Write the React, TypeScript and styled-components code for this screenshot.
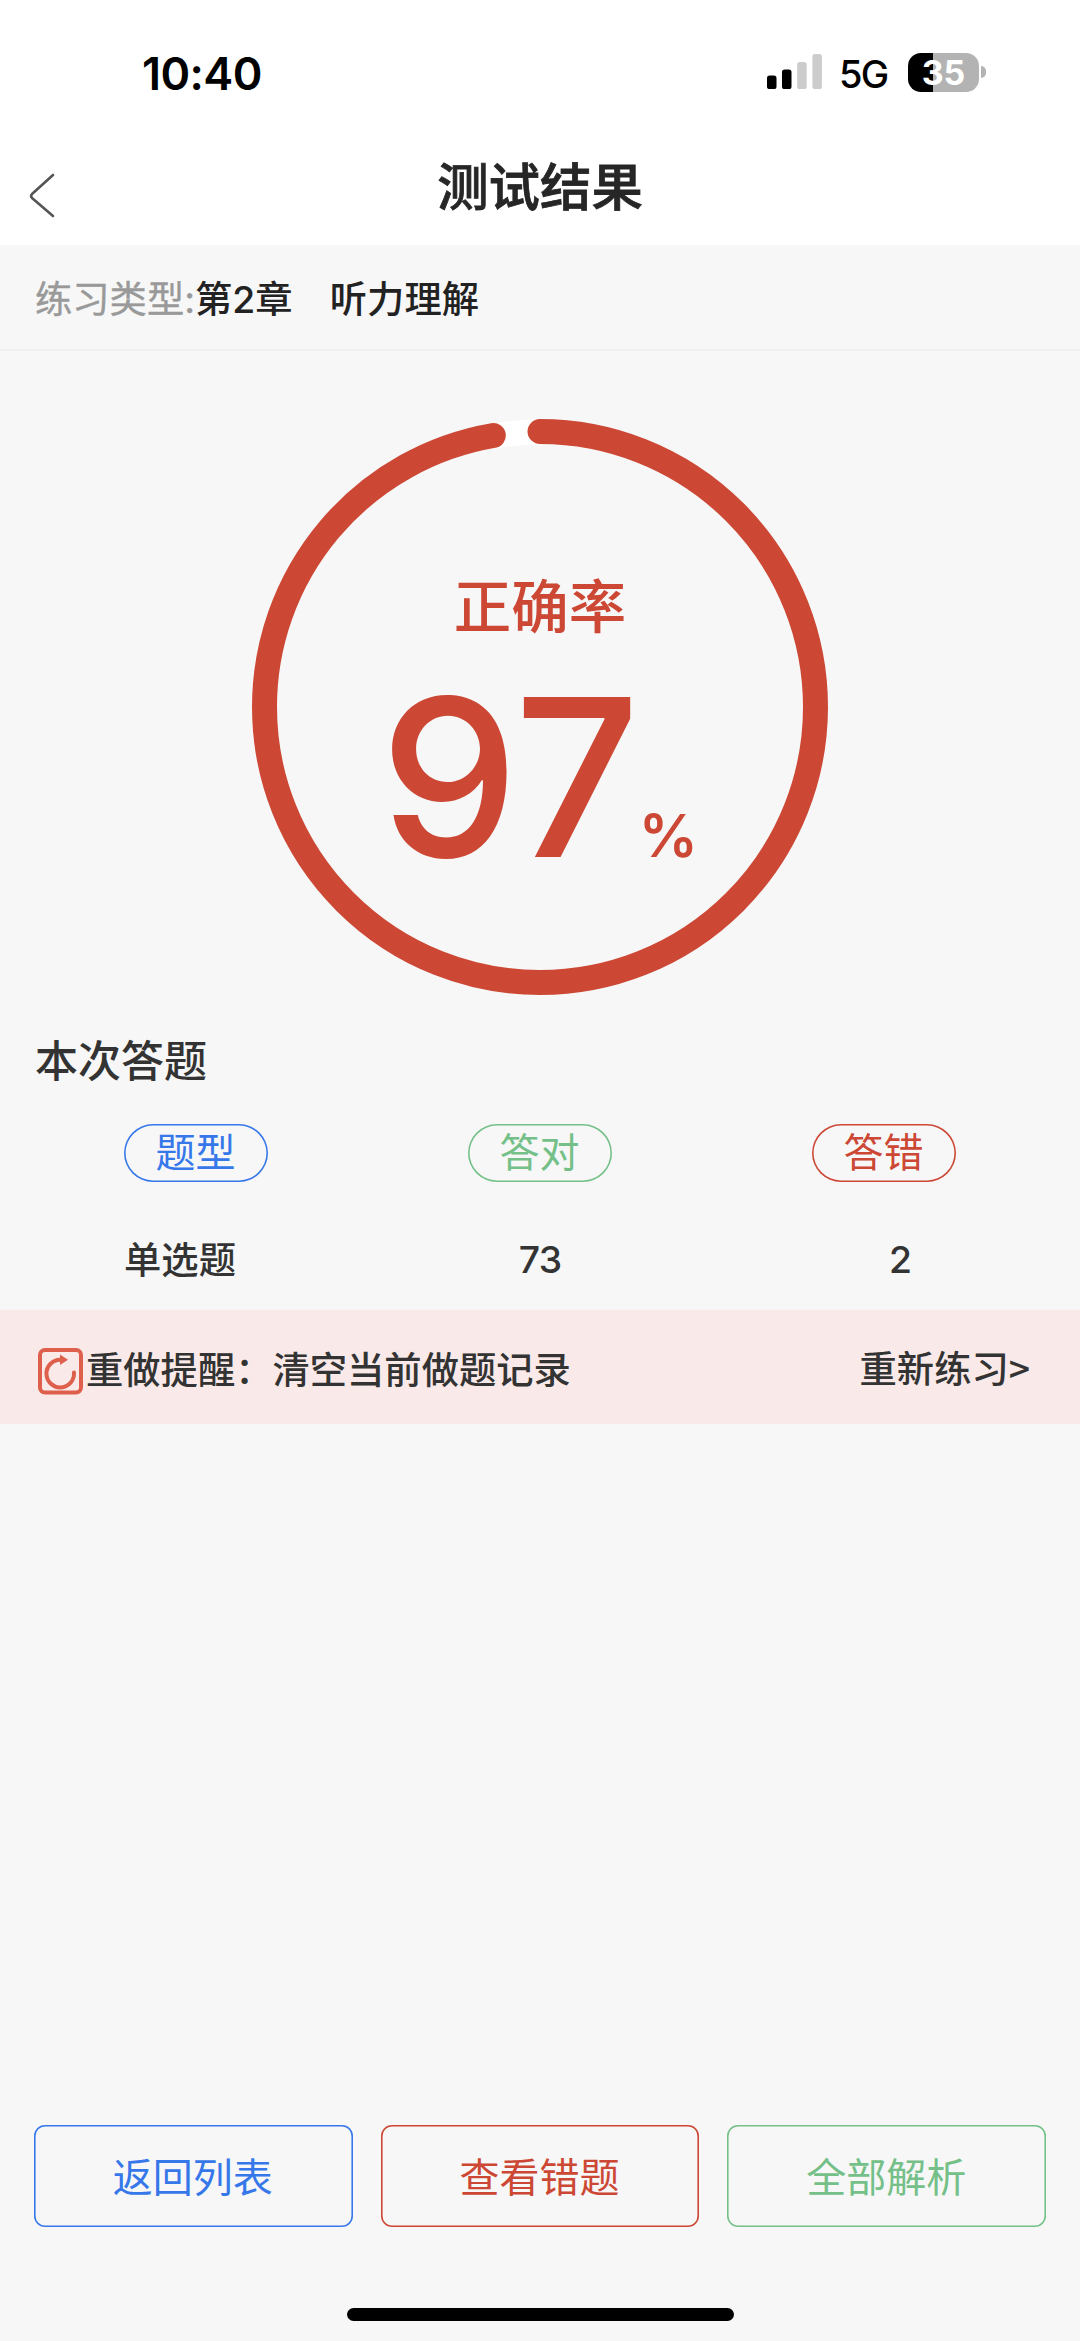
import React from "react";
import styled, { createGlobalStyle } from "styled-components";

const RED = "#cc4835";
const BLUE = "#3678ea";
const GREEN = "#74c088";

const GlobalStyle = createGlobalStyle`
  * { box-sizing: border-box; }
  body {
    margin: 0;
    background: #f6f6f6;
    font-family: Inter, "Noto Sans CJK SC", sans-serif;
  }
`;

const Screen = styled.div`
  display: flex;
  flex-direction: column;
  width: 1080px;
  height: 2341px;
  background: #f7f7f7;
  color: #333;
  overflow: hidden;
`;

const StatusBar = styled.header`
  display: flex;
  align-items: center;
  justify-content: space-between;
  height: 144px;
  padding: 0 94px 0 142px;
  background: #fff;
  color: #000;
`;

const Clock = styled.time`
  font-size: 45px;
  font-weight: 600;
  line-height: 56px;
  letter-spacing: -0.6px;
  margin-top: 4px;
`;

const StatusIcons = styled.div`
  display: flex;
  align-items: center;
`;

const Network = styled.span`
  width: 49px;
  margin: 3px 20px 0 16px;
  font-size: 38px;
  font-weight: 500;
  line-height: 46px;
  letter-spacing: -1.8px;
  white-space: nowrap;
`;

const Battery = styled.span<{ $level: number }>`
  display: grid;
  place-items: center;
  width: 71px;
  height: 39px;
  border-radius: 13px;
  background: linear-gradient(to right, #000 ${(p) => p.$level}%, #b3b3b3 ${(p) => p.$level}%);
  color: #fff;
  font-size: 34px;
  font-weight: 700;
  line-height: 39px;
`;

const BatteryTip = styled.span`
  width: 5px;
  height: 12px;
  margin-left: 2px;
  border-radius: 0 5px 5px 0;
  background: #b3b3b3;
`;

const NavBar = styled.nav`
  display: grid;
  grid-template-columns: 90px 1fr 90px;
  align-items: center;
  height: 101px;
  padding-bottom: 16px;
  background: #fff;
`;

const BackButton = styled.button`
  display: flex;
  margin: 18px 0 0 28px;
  padding: 0;
  border: 0;
  background: none;
`;

const Title = styled.h1`
  margin: 0;
  text-align: center;
  font-size: 51.4px;
  font-weight: 500;
  line-height: 74px;
  color: #262626;
  -webkit-text-stroke: 0.8px #262626;
`;

const TypeRow = styled.div`
  display: flex;
  align-items: center;
  height: 106px;
  padding: 5px 35px 0;
  border-bottom: 2px solid #f0f0f0;
  font-size: 37.3px;
  line-height: 56px;
`;

const TypeLabel = styled.span`
  color: #999;
  -webkit-text-stroke: 0.4px #999;
`;

const TypeValue = styled.span`
  color: #222;
  font-weight: 500;
  white-space: pre;
`;

const Gauge = styled.section`
  display: grid;
  justify-content: center;
  height: 644px;
  padding-top: 68px;
  margin-bottom: 34px;
  color: ${RED};

  > * { grid-area: 1 / 1; }
`;

const GaugeText = styled.div`
  display: flex;
  flex-direction: column;
  align-items: center;
  padding-top: 145px;
`;

const GaugeLabel = styled.div`
  font-size: 57.5px;
  font-weight: 500;
  line-height: 86px;
`;

const GaugeValue = styled.div`
  display: flex;
  align-items: baseline;
  justify-content: center;
  margin: -6px 2px 0 0;
`;

const GaugeNumber = styled.span`
  font-size: 220px;
  font-weight: 500;
  line-height: 266px;
`;

const GaugePercent = styled.span`
  font-size: 59px;
  font-weight: 600;
  margin-left: -1px;
`;

const SectionTitle = styled.h2`
  margin: 0;
  padding: 0 35px;
  font-size: 43px;
  font-weight: 500;
  line-height: 64px;
`;

const PillRow = styled.div`
  display: grid;
  grid-template-columns: repeat(3, 1fr);
  justify-items: center;
  margin-top: 31px;
  padding: 0 24px;
`;

const Pill = styled.span<{ $color: string }>`
  display: grid;
  place-items: center;
  width: 144px;
  height: 58px;
  border-radius: 29px;
  box-shadow: inset 0 0 0 1.6px ${(p) => p.$color};
  color: ${(p) => p.$color};
  font-size: 40px;
  line-height: 56px;
  padding-right: 1px;
`;

const ResultRow = styled.div`
  display: grid;
  grid-template-columns: repeat(3, 1fr);
  align-items: center;
  justify-items: center;
  height: 128px;
  padding-top: 29px;
  font-size: 37.3px;
  font-weight: 500;
  line-height: 56px;
`;

const Count = styled.span`
  margin-top: -2px;
  letter-spacing: -0.8px;
`;

const RedoBanner = styled.div`
  display: flex;
  align-items: center;
  height: 114px;
  padding: 8px 50px 0 36px;
  background: #f9eae9;
  font-size: 37.3px;
  font-weight: 500;
  line-height: 56px;
`;

const RedoHint = styled.span`
  flex: 1;
  margin-left: 2px;
`;

const RedoAction = styled.a`
  margin-top: -5px;
`;

const Chevron = styled.span`
  font-family: "Noto Sans CJK SC", sans-serif;
`;

const Footer = styled.footer`
  display: flex;
  flex-direction: column;
  align-items: center;
  margin-top: auto;
  padding: 0 34px 20px;
`;

const Actions = styled.div`
  display: grid;
  grid-template-columns: repeat(3, 1fr);
  gap: 28px;
  width: 100%;
  margin-bottom: 81px;
`;

const ActionButton = styled.button<{ $color: string }>`
  height: 102px;
  padding: 0 1px 2px 0;
  border: 0;
  border-radius: 11px;
  box-shadow: inset 0 0 0 1.6px ${(p) => p.$color};
  background: none;
  color: ${(p) => p.$color};
  font: inherit;
  font-size: 40px;
`;

const HomeIndicator = styled.div`
  width: 387px;
  height: 13px;
  border-radius: 7px;
  background: #000;
`;

const SignalIcon = () => (
  <svg width="56" height="36" viewBox="0 0 56 36">
    <rect x="0" y="21.5" width="9.5" height="13.5" rx="2.6" fill="#000" />
    <rect x="15" y="15.5" width="9.5" height="19.5" rx="2.6" fill="#000" />
    <rect x="30.2" y="8" width="9.5" height="27" rx="2.6" fill="#ccc" />
    <rect x="45.4" y="0" width="9.5" height="35" rx="2.6" fill="#ccc" />
  </svg>
);

const BackIcon = () => (
  <svg width="28" height="46" viewBox="0 0 28 46" fill="none" stroke="#555" strokeWidth="2.6" strokeLinecap="round" strokeLinejoin="round">
    <path d="M25 2 L4 21 Q2.2 23 4 25 L25 43" />
  </svg>
);

const RedoIcon = () => (
  <svg width="48" height="48" viewBox="0 0 48 48" fill="none" stroke="#dd5f4c">
    <rect x="4" y="3" width="41" height="42.5" rx="5" strokeWidth="4" />
    <path d="M38 25.5 A13.8 13.8 0 1 1 24.2 12.8" strokeWidth="4" strokeLinecap="round" />
    <path d="M24 7.5 L32 12.8 L24 18 Z" fill="#dd5f4c" stroke="none" />
  </svg>
);

const RING_RADIUS = 275.5;
const RING_LENGTH = 2 * Math.PI * RING_RADIUS;

const Ring = ({ ratio }: { ratio: number }) => (
  <svg width="576" height="576" viewBox="0 0 576 576" fill="none" strokeWidth="25">
    <path d="M288 13 A275.5 275.5 0 0 0 242 16.9" stroke="#fff" />
    <circle
      cx="288"
      cy="288"
      r={RING_RADIUS}
      stroke={RED}
      strokeLinecap="round"
      strokeDasharray={`${RING_LENGTH * ratio - 1.5} ${RING_LENGTH}`}
      transform="rotate(-90 288 288)"
    />
  </svg>
);

const correct = 73;
const wrong = 2;

export default function App() {
  const ratio = correct / (correct + wrong);
  return (
    <>
      <GlobalStyle />
      <Screen lang="zh-CN">
        <StatusBar>
          <Clock>10:40</Clock>
          <StatusIcons>
            <SignalIcon />
            <Network>5G</Network>
            <Battery $level={35}>35</Battery>
            <BatteryTip />
          </StatusIcons>
        </StatusBar>
        <NavBar>
          <BackButton aria-label="返回">
            <BackIcon />
          </BackButton>
          <Title>测试结果</Title>
        </NavBar>
        <TypeRow>
          <TypeLabel>练习类型:</TypeLabel>
          <TypeValue>第2章{"\u3000"}听力理解</TypeValue>
        </TypeRow>
        <Gauge>
          <Ring ratio={ratio} />
          <GaugeText>
            <GaugeLabel>正确率</GaugeLabel>
            <GaugeValue>
              <GaugeNumber>{Math.floor(ratio * 100)}</GaugeNumber>
              <GaugePercent>%</GaugePercent>
            </GaugeValue>
          </GaugeText>
        </Gauge>
        <SectionTitle>本次答题</SectionTitle>
        <PillRow>
          <Pill $color={BLUE}>题型</Pill>
          <Pill $color={GREEN}>答对</Pill>
          <Pill $color={RED}>答错</Pill>
        </PillRow>
        <ResultRow>
          <span>单选题</span>
          <Count>{correct}</Count>
          <Count>{wrong}</Count>
        </ResultRow>
        <RedoBanner>
          <RedoIcon />
          <RedoHint>重做提醒：清空当前做题记录</RedoHint>
          <RedoAction>重新练习<Chevron>&gt;</Chevron></RedoAction>
        </RedoBanner>
        <Footer>
          <Actions>
            <ActionButton $color={BLUE}>返回列表</ActionButton>
            <ActionButton $color={RED}>查看错题</ActionButton>
            <ActionButton $color={GREEN}>全部解析</ActionButton>
          </Actions>
          <HomeIndicator />
        </Footer>
      </Screen>
    </>
  );
}
